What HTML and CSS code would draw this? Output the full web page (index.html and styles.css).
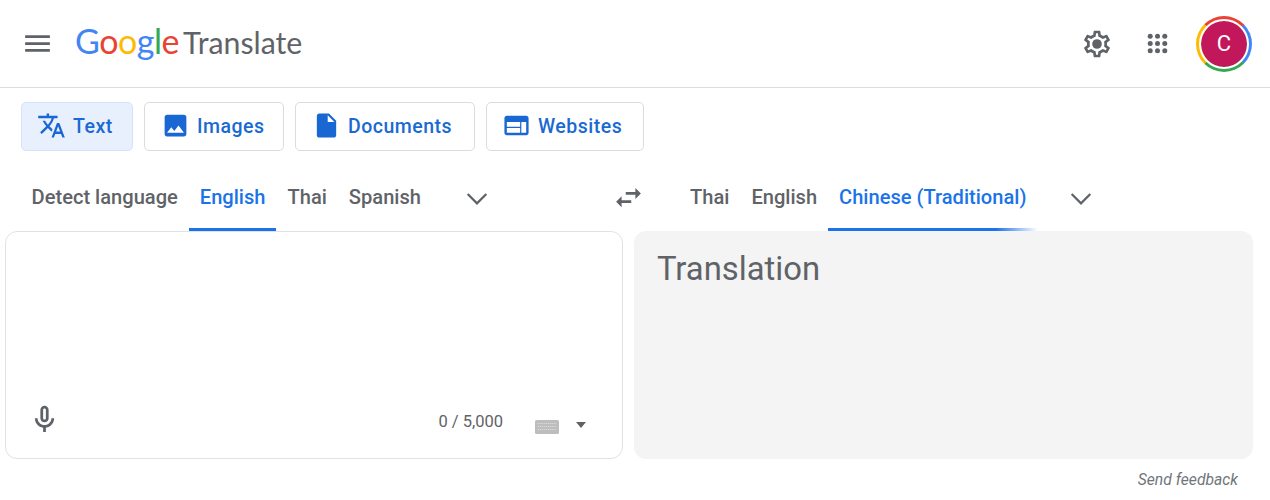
FILE: index.html
```html
<!DOCTYPE html>
<html lang="en">
<head>
<meta charset="utf-8">
<title>Google Translate</title>
<link rel="stylesheet" href="styles.css">
</head>
<body>
<header class="topbar">
  <svg class="icon menu-icon" viewBox="0 0 24 24"><path d="M3 18h18v-2H3v2zm0-5h18v-2H3v2zm0-7v2h18V6H3z"/></svg>
  <div class="logo"><span class="wordmark"><span class="g-blue">G</span><span class="g-red">o</span><span class="g-yellow">o</span><span class="g-blue">g</span><span class="g-green">l</span><span class="g-red">e</span></span><span class="product">Translate</span></div>
  <div class="top-actions">
    <svg class="icon gear-icon" viewBox="0 0 24 24"><path d="M19.43 12.98c.04-.32.07-.64.07-.98 0-.34-.03-.66-.07-.98l2.11-1.65c.19-.15.24-.42.12-.64l-2-3.46c-.09-.16-.26-.25-.44-.25-.06 0-.12.01-.17.03l-2.49 1c-.52-.4-1.08-.73-1.69-.98l-.38-2.65C14.46 2.18 14.25 2 14 2h-4c-.25 0-.46.18-.49.42l-.38 2.65c-.61.25-1.17.59-1.69.98l-2.49-1c-.06-.02-.12-.03-.18-.03-.17 0-.34.09-.43.25l-2 3.46c-.13.22-.07.49.12.64l2.11 1.65c-.04.32-.07.65-.07.98 0 .33.03.66.07.98l-2.11 1.65c-.19.15-.24.42-.12.64l2 3.46c.09.16.26.25.44.25.06 0 .12-.01.17-.03l2.49-1c.52.4 1.08.73 1.69.98l.38 2.65c.03.24.24.42.49.42h4c.25 0 .46-.18.49-.42l.38-2.65c.61-.25 1.17-.59 1.69-.98l2.49 1c.06.02.12.03.18.03.17 0 .34-.09.43-.25l2-3.46c.12-.22.07-.49-.12-.64l-2.11-1.65zm-1.98-1.71c.04.31.05.52.05.73 0 .21-.02.43-.05.73l-.14 1.13.89.7 1.08.84-.7 1.21-1.27-.51-1.04-.42-.9.68c-.43.32-.84.56-1.25.73l-1.06.43-.16 1.13-.2 1.35h-1.4l-.19-1.35-.16-1.13-1.06-.43c-.43-.18-.83-.41-1.23-.71l-.91-.7-1.06.43-1.27.51-.7-1.21 1.08-.84.89-.7-.14-1.13c-.03-.31-.05-.54-.05-.74s.02-.43.05-.73l.14-1.13-.89-.7-1.08-.84.7-1.21 1.27.51 1.04.42.9-.68c.43-.32.84-.56 1.25-.73l1.06-.43.16-1.13.2-1.35h1.39l.19 1.35.16 1.13 1.06.43c.43.18.83.41 1.23.71l.91.7 1.06-.43 1.27-.51.7 1.21-1.07.85-.89.7.14 1.13z"/><circle cx="12" cy="12" r="3.6"/></svg>
    <svg class="icon apps-icon" viewBox="0 0 24 24"><circle cx="5" cy="5" r="2.4"/><circle cx="12" cy="5" r="2.4"/><circle cx="19" cy="5" r="2.4"/><circle cx="5" cy="12" r="2.4"/><circle cx="12" cy="12" r="2.4"/><circle cx="19" cy="12" r="2.4"/><circle cx="5" cy="19" r="2.4"/><circle cx="12" cy="19" r="2.4"/><circle cx="19" cy="19" r="2.4"/></svg>
    <div class="avatar-ring"><div class="avatar">C</div></div>
  </div>
</header>

<nav class="modes">
  <button class="mode mode-text active">
    <svg class="mode-icon" viewBox="0 0 24 24"><path d="M12.87 15.07l-2.54-2.51.03-.03c1.74-1.94 2.98-4.17 3.71-6.53H17V4h-7V2H8v2H1v1.99h11.17C11.5 7.92 10.44 9.75 9 11.35 8.07 10.32 7.3 9.19 6.69 8h-2c.73 1.63 1.73 3.17 2.98 4.56l-5.09 5.02L4 19l5-5 3.11 3.11.76-2.04zM18.5 10h-2L12 22h2l1.12-3h4.75L21 22h2l-4.5-12zm-2.62 7l1.62-4.33L19.12 17h-3.24z"/></svg>Text
  </button>
  <button class="mode mode-images">
    <svg class="mode-icon" viewBox="0 0 24 24"><path d="M21 19V5c0-1.1-.9-2-2-2H5c-1.1 0-2 .9-2 2v14c0 1.1.9 2 2 2h14c1.1 0 2-.9 2-2zM8.5 13.5l2.5 3.01L14.5 12l4.5 6H5l3.5-4.5z"/></svg>Images
  </button>
  <button class="mode mode-docs">
    <svg class="mode-icon" viewBox="0 0 24 24"><path d="M14 2H6c-1.1 0-1.99.9-1.99 2L4 20c0 1.1.89 2 1.99 2H18c1.1 0 2-.9 2-2V8l-6-6zm-1 7V3.5L18.5 9H13z"/></svg>Documents
  </button>
  <button class="mode mode-web">
    <svg class="mode-icon" viewBox="0 0 24 24"><path d="M20 4H4c-1.1 0-1.99.9-1.99 2L2 18c0 1.1.9 2 2 2h16c1.1 0 2-.9 2-2V6c0-1.1-.9-2-2-2zm-5 14H4v-4h11v4zm0-5H4V9h11v4zm5 5h-4V9h4v9z"/></svg>Websites
  </button>
</nav>

<section class="lang-row">
  <div class="lang-group lang-source">
    <span class="lang">Detect language</span>
    <span class="lang selected">English</span>
    <span class="lang">Thai</span>
    <span class="lang">Spanish</span>
    <svg class="chevron chevron-source" viewBox="0 0 24 24"><path d="M5 9l7 7 7-7"/></svg>
  </div>
  <svg class="icon swap" viewBox="0 0 24 24"><path d="M6.99 11L3 15l3.99 4v-3H14v-2H6.99v-3zM21 9l-3.99-4v3H10v2h7.01v3L21 9z"/></svg>
  <div class="lang-group lang-target">
    <span class="lang">Thai</span>
    <span class="lang">English</span>
    <span class="lang selected fading">Chinese (Traditional)</span>
    <svg class="chevron chevron-target" viewBox="0 0 24 24"><path d="M5 9l7 7 7-7"/></svg>
  </div>
</section>

<main class="panels">
  <div class="panel panel-input">
    <div class="input-foot">
      <svg class="icon mic" viewBox="0 0 24 24"><path d="M12 14c1.66 0 3-1.34 3-3V5c0-1.66-1.34-3-3-3S9 3.34 9 5v6c0 1.66 1.34 3 3 3zm-1-9c0-.55.45-1 1-1s1 .45 1 1v6c0 .55-.45 1-1 1s-1-.45-1-1V5zm6 6c0 2.76-2.24 5-5 5s-5-2.24-5-5H5c0 3.53 2.61 6.43 6 6.92V21h2v-3.08c3.39-.49 6-3.39 6-6.92h-2z"/></svg>
      <span class="counter">0 / 5,000</span>
      <svg class="keyboard" viewBox="0 0 24 14"><rect width="24" height="14" rx="1.5" fill="#bdbdbd"/><path d="M2.5 3.5h19M2.5 6.5h19M2.5 9.5h19" stroke="#d9d9d9" stroke-width="1" stroke-dasharray="1.4 .7"/></svg>
      <span class="caret"></span>
    </div>
  </div>
  <div class="panel panel-output">Translation</div>
</main>

<footer class="feedback">Send feedback</footer>
</body>
</html>
```
FILE: styles.css
```css
* { box-sizing: border-box; }
html, body { margin: 0; padding: 0; }
body {
  width: 1270px;
  height: 500px;
  overflow: hidden;
  background: #fff;
  font-family: Roboto, "Liberation Sans", sans-serif;
  color: #5f6368;
}
.icon { display: block; fill: #5f6368; flex: none; }

.topbar {
  display: flex;
  align-items: center;
  height: 88px;
  padding-left: 21px;
  border-bottom: 1px solid #dadce0;
}
.menu-icon { width: 33px; height: 33px; }
.logo { display: flex; align-items: baseline; margin-left: 21px; margin-bottom: 6px; }
.wordmark { font-family: Lato, sans-serif; font-size: 34px; letter-spacing: -0.45px; }
.product { font-family: Lato, sans-serif; font-size: 30.3px; color: #5f6368; margin-left: 4px; }
.g-blue { color: #4285f4; }
.g-red { color: #ea4335; }
.g-yellow { color: #fbbc05; }
.g-green { color: #34a853; }
.top-actions { display: flex; align-items: center; margin-left: auto; padding-right: 18px; }
.gear-icon { width: 32px; height: 32px; }
.apps-icon { width: 25px; height: 25px; margin-left: 32px; }
.avatar-ring {
  width: 56px;
  height: 56px;
  margin-left: 26px;
  padding: 5px;
  border-radius: 50%;
  background: conic-gradient(from -45deg, #ea4335 0 25%, #4285f4 25% 50%, #34a853 50% 75%, #fbbc05 75% 100%);
}
.avatar {
  width: 46px;
  height: 46px;
  border-radius: 50%;
  background: #c2185b;
  outline: 2px solid #fff;
  color: #fff;
  font-size: 22px;
  display: flex;
  align-items: center;
  justify-content: center;
}

.modes { display: flex; gap: 11px; padding: 14px 0 0 21px; }
.mode {
  display: flex;
  align-items: center;
  height: 49px;
  padding: 0;
  border: 1px solid #dadce0;
  border-radius: 5px;
  background: #fff;
  color: #1a6ad2;
  font-family: Roboto, sans-serif;
  font-size: 19.5px;
  font-weight: 500;
  letter-spacing: 0.5px;
}
.mode.active { background: #e8f0fe; border-color: #d2e3fc; }
.mode-text { width: 112px; padding-left: 15px; }
.mode-images { width: 140px; padding-left: 16px; }
.mode-docs { width: 180px; padding-left: 16px; }
.mode-web { width: 158px; padding-left: 15px; }
.mode-icon { width: 29px; height: 29px; margin-right: 7px; margin-bottom: 2px; fill: #1967d2; flex: none; }

.lang-row { display: grid; grid-template-columns: 607px 33px 1fr; height: 80px; padding-left: 5px; padding-top: 14px; }
.lang-group { display: flex; align-items: stretch; }
.lang-source { padding-left: 15.6px; }
.lang-target { padding-left: 34px; }
.lang {
  display: flex;
  align-items: center;
  height: 66px;
  padding: 0 11px;
  font-size: 20.1px;
  font-weight: 500;
  color: #5f6368;
  white-space: nowrap;
  border-bottom: 3px solid transparent;
}
.lang.selected { color: #1a73e8; border-bottom-color: #1a73e8; }
.lang.fading { border-image: linear-gradient(90deg, #1a73e8 80%, #fff 100%) 1; }
.chevron { display: block; flex: none; width: 32px; height: 32px; align-self: center; fill: none; stroke: #5f6368; stroke-width: 1.7; }
.chevron-source { margin-left: 29px; }
.chevron-target { margin-left: 28px; }
.swap { width: 33px; height: 33px; align-self: center; margin-top: -2px; }

.panels { display: grid; grid-template-columns: 618px 619px; gap: 11px; padding-left: 5px; height: 228px; }
.panel { border-radius: 12px; }
.panel-input {
  display: flex;
  flex-direction: column;
  justify-content: flex-end;
  border: 1px solid #e0e2e5;
  padding: 0 36px 21px 22px;
}
.input-foot { display: flex; align-items: center; height: 36px; }
.mic { width: 33px; height: 33px; }
.counter { margin-left: auto; font-size: 16.5px; color: #5f6368; margin-top: 4px; }
.keyboard { width: 24px; height: 14px; margin-left: 32px; margin-top: 16px; flex: none; }
.caret {
  width: 0;
  height: 0;
  margin-left: 17px;
  margin-top: 11px;
  border-left: 5.5px solid transparent;
  border-right: 5.5px solid transparent;
  border-top: 6px solid #5f6368;
}
.panel-output {
  background: #f4f4f4;
  padding: 16px 23px;
  font-size: 32.8px;
  line-height: 44px;
  color: #5f6368;
}
.feedback {
  padding: 11px 32px 0 0;
  text-align: right;
  font-size: 15.7px;
  font-style: italic;
  color: #70757a;
}
```
